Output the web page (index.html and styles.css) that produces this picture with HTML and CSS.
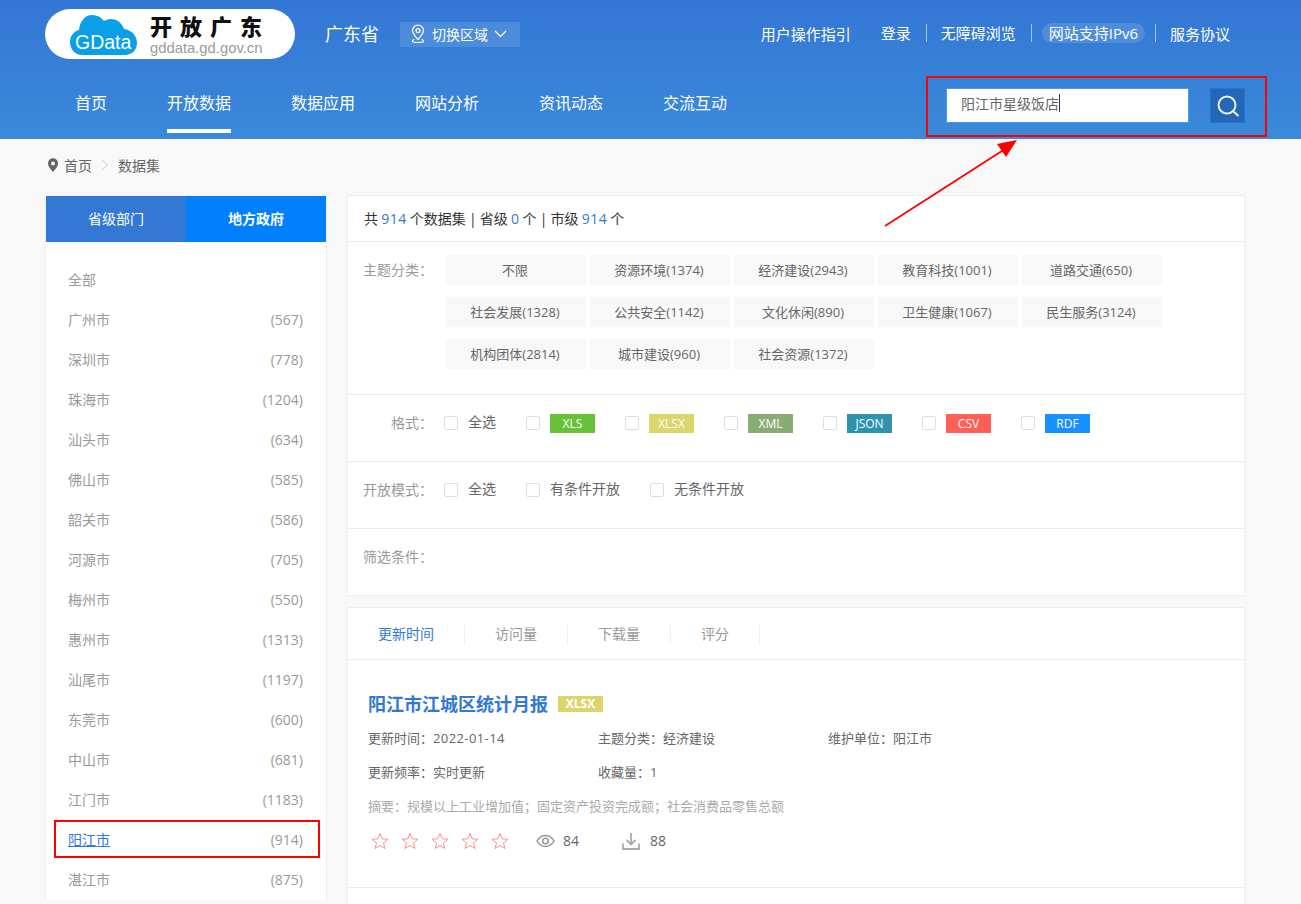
FILE: index.html
```html
<!DOCTYPE html>
<html>
<head>
    <meta charset="utf-8">
    <title>开放广东 - 数据集</title>
    <link rel="stylesheet" href="styles.css">
</head>
<body>
<div class="page">
    <header class="header">
        <div class="wrap">
            <div class="topbar">
                <div class="logo">
                    <svg class="logo-cloud" width="67" height="40" viewBox="0 0 67 40">
                        <path fill="#0aa0e8" d="M12 40C5 40 0 34 0 27c0-6 4-11 9-12C10 6 15 0 22 0c5 0 9 2 12 6 2-1 4-2 7-2 6 0 11 4 13 10 8 1 13 7 13 14 0 7-5 12-12 12z"/>
                        <text x="5" y="34" class="logo-gdata">GData</text>
                    </svg>
                    <div class="logo-text">
                        <div class="logo-title">开放广东</div>
                        <div class="logo-url">gddata.gd.gov.cn</div>
                    </div>
                </div>
                <div class="province">广东省</div>
                <div class="region">
                    <svg width="16" height="20" viewBox="0 0 16 20" fill="none" stroke="#fff" stroke-width="1.2">
                        <path d="M8 15.500C5 12 2.500 9.500 2.500 6.600a5.500 5.500 0 0 1 11 0c0 2.900-2.500 5.400-5.500 8.900z"/>
                        <circle cx="8" cy="6.600" r="2"/>
                        <path d="M4.500 15.500C2.500 16 2 17 2.800 17.800c1 .9 9.400.9 10.400 0 .8-.8.3-1.800-1.700-2.300"/>
                    </svg>
                    <span>切换区域</span>
                    <svg width="13" height="8" viewBox="0 0 13 8" fill="none" stroke="#fff" stroke-width="1.200"><path d="M1 1l5.500 5.500L12 1"/></svg>
                </div>
                <div class="toplinks">
                    <a class="guide">用户操作指引</a>
                    <a class="sep">登录</a>
                    <a class="sep">无障碍浏览</a>
                    <a class="sep"><span class="pill">网站支持IPv6</span></a>
                    <a>服务协议</a>
                </div>
            </div>
            <div class="navbar">
                <nav class="nav">
                    <a>首页</a>
                    <a class="active">开放数据</a>
                    <a>数据应用</a>
                    <a>网站分析</a>
                    <a>资讯动态</a>
                    <a>交流互动</a>
                </nav>
                <div class="search">
                    <div class="search-input">阳江市星级饭店<i class="caret"></i></div>
                    <button class="search-btn">
                        <svg width="24" height="24" viewBox="0 0 24 24" fill="none" stroke="#e8f0fa" stroke-width="2"><circle cx="11" cy="11" r="8.500"/><path d="M17 17l5.500 5"/></svg>
                    </button>
                </div>
            </div>
        </div>
    </header>

    <div class="wrap">
        <div class="crumb">
            <svg width="12" height="14" viewBox="0 0 12 14"><path fill="#6a6460" fill-rule="evenodd" d="M6 14C3 10.500 1 8.300 1 5.300a5 5 0 0 1 10 0C11 8.300 9 10.500 6 14zM6 3.500a2 2 0 1 0 0 4 2 2 0 0 0 0-4z"/></svg>
            <span>首页</span>
            <svg width="8" height="12" viewBox="0 0 8 12" fill="none" stroke="#cfcfcf"><path d="M1 1l5.500 5L1 11"/></svg>
            <span>数据集</span>
        </div>

        <div class="content">
            <aside class="side">
                <div class="side-tabs">
                    <div class="side-tab">省级部门</div>
                    <div class="side-tab current">地方政府</div>
                </div>
                <ul class="city-list">
                    <li><a>全部</a></li>
                    <li><a>广州市</a><span>(567)</span></li>
                    <li><a>深圳市</a><span>(778)</span></li>
                    <li><a>珠海市</a><span>(1204)</span></li>
                    <li><a>汕头市</a><span>(634)</span></li>
                    <li><a>佛山市</a><span>(585)</span></li>
                    <li><a>韶关市</a><span>(586)</span></li>
                    <li><a>河源市</a><span>(705)</span></li>
                    <li><a>梅州市</a><span>(550)</span></li>
                    <li><a>惠州市</a><span>(1313)</span></li>
                    <li><a>汕尾市</a><span>(1197)</span></li>
                    <li><a>东莞市</a><span>(600)</span></li>
                    <li><a>中山市</a><span>(681)</span></li>
                    <li><a>江门市</a><span>(1183)</span></li>
                    <li class="on"><a>阳江市</a><span>(914)</span></li>
                    <li><a>湛江市</a><span>(875)</span></li>
                </ul>
            </aside>

            <main class="main">
                <section class="filter box">
                    <div class="total">共 <b>914</b> 个数据集 | 省级 <b>0</b> 个 | 市级 <b>914</b> 个</div>
                    <div class="row row-theme">
                        <div class="label">主题分类：</div>
                        <div class="chips">
                            <a>不限</a>
                            <a>资源环境(1374)</a>
                            <a>经济建设(2943)</a>
                            <a>教育科技(1001)</a>
                            <a>道路交通(650)</a>
                            <a>社会发展(1328)</a>
                            <a>公共安全(1142)</a>
                            <a>文化休闲(890)</a>
                            <a>卫生健康(1067)</a>
                            <a>民生服务(3124)</a>
                            <a>机构团体(2814)</a>
                            <a>城市建设(960)</a>
                            <a>社会资源(1372)</a>
                        </div>
                    </div>
                    <div class="row">
                        <div class="label">格式：</div>
                        <div class="checks">
                            <label><i class="cb"></i>全选</label>
                            <label><i class="cb"></i><em class="tag xls">XLS</em></label>
                            <label><i class="cb"></i><em class="tag xlsx">XLSX</em></label>
                            <label><i class="cb"></i><em class="tag xml">XML</em></label>
                            <label><i class="cb"></i><em class="tag json">JSON</em></label>
                            <label><i class="cb"></i><em class="tag csv">CSV</em></label>
                            <label><i class="cb"></i><em class="tag rdf">RDF</em></label>
                        </div>
                    </div>
                    <div class="row">
                        <div class="label">开放模式：</div>
                        <div class="checks">
                            <label><i class="cb"></i>全选</label>
                            <label><i class="cb"></i>有条件开放</label>
                            <label><i class="cb"></i>无条件开放</label>
                        </div>
                    </div>
                    <div class="row last">
                        <div class="label">筛选条件：</div>
                    </div>
                </section>

                <section class="results box">
                    <div class="sort">
                        <a class="active">更新时间</a>
                        <a>访问量</a>
                        <a>下载量</a>
                        <a>评分</a>
                    </div>
                    <article class="item">
                        <h3><a>阳江市江城区统计月报</a><em class="item-tag">XLSX</em></h3>
                        <div class="meta">
                            <span>更新时间：<i class="num">2022-01-14</i></span>
                            <span>主题分类：经济建设</span>
                            <span>维护单位：阳江市</span>
                        </div>
                        <div class="meta">
                            <span>更新频率：实时更新</span>
                            <span>收藏量：1</span>
                        </div>
                        <div class="summary">摘要：规模以上工业增加值；固定资产投资完成额；社会消费品零售总额</div>
                        <div class="stats">
                            <div class="stars">
                                <svg width="18" height="18" viewBox="0 0 18 18"><path class="star" d="M9 1.500l2.200 5.300 5.700.4-4.400 3.700 1.400 5.600L9 13.500l-4.900 3 1.400-5.600L1.100 7.200l5.700-.4z"/></svg>
                                <svg width="18" height="18" viewBox="0 0 18 18"><path class="star" d="M9 1.500l2.200 5.300 5.700.4-4.400 3.700 1.400 5.600L9 13.500l-4.900 3 1.400-5.600L1.100 7.200l5.700-.4z"/></svg>
                                <svg width="18" height="18" viewBox="0 0 18 18"><path class="star" d="M9 1.500l2.200 5.300 5.700.4-4.400 3.700 1.400 5.600L9 13.500l-4.900 3 1.400-5.600L1.100 7.200l5.700-.4z"/></svg>
                                <svg width="18" height="18" viewBox="0 0 18 18"><path class="star" d="M9 1.500l2.200 5.300 5.700.4-4.400 3.700 1.400 5.600L9 13.500l-4.900 3 1.400-5.600L1.100 7.200l5.700-.4z"/></svg>
                                <svg width="18" height="18" viewBox="0 0 18 18"><path class="star" d="M9 1.500l2.200 5.300 5.700.4-4.400 3.700 1.400 5.600L9 13.500l-4.900 3 1.400-5.600L1.100 7.200l5.700-.4z"/></svg>
                            </div>
                            <div class="stat views">
                                <svg width="19" height="14" viewBox="0 0 19 14" fill="none" stroke="#999" stroke-width="1.500"><path d="M1 7c2-3.500 5-5.500 8.500-5.500S16 3.500 18 7c-2 3.500-5 5.500-8.500 5.500S3 10.500 1 7z"/><circle cx="9.500" cy="7" r="2.800"/></svg>
                                <span>84</span>
                            </div>
                            <div class="stat">
                                <svg width="18" height="18" viewBox="0 0 18 18" fill="none" stroke="#aaa" stroke-width="1.800"><path d="M9 1v11M4.500 8L9 12.500 13.500 8"/><path d="M1 11.500V17h16v-5.500"/></svg>
                                <span>88</span>
                            </div>
                        </div>
                    </article>
                </section>
            </main>
        </div>
    </div>

    <!-- annotations drawn on top of the screenshot -->
    <div class="mark mark-search"></div>
    <div class="mark mark-city"></div>
    <svg class="arrow" width="140" height="96" viewBox="0 0 140 96">
        <path d="M2 90L122 13" stroke="#f00" stroke-width="1.800"/>
        <path d="M134 4L114 8l9 13z" fill="#f00"/>
    </svg>
</div>
</body>
</html>
```

FILE: styles.css
```css
* {
    box-sizing: border-box;
}

html, body {
    margin: 0;
    padding: 0;
}

body {
    background-color: #f8f8f8;
    font-family: "Open Sans", "Noto Sans CJK SC", sans-serif;
    font-size: 14px;
    color: #666;
}

a {
    color: inherit;
    text-decoration: none;
}

em, i {
    font-style: normal;
}

.page {
    position: relative;
    height: 904px;
    overflow: hidden;
}

.wrap {
    width: 1200px;
    margin-left: 45px;
}

/* header */
.header {
    height: 139px;
    background: linear-gradient(180deg, #3377d5, #3a89da);
    color: #fff;
}

.topbar {
    display: flex;
    align-items: center;
    height: 68px;
}

.logo {
    display: flex;
    align-items: center;
    width: 250px;
    height: 50px;
    padding-left: 25px;
    background-color: #fff;
    border-radius: 25px;
}

.logo-cloud {
    margin-top: 2px;
}

.logo-gdata {
    font-family: "Liberation Sans", sans-serif;
    font-size: 19.500px;
    fill: #fff;
}

.logo-text {
    margin-left: 13px;
}

.logo-title {
    height: 24px;
    font-size: 22px;
    font-weight: 900;
    line-height: 24px;
    letter-spacing: 8px;
    white-space: nowrap;
    color: #111;
}

.logo-url {
    margin-top: 3px;
    font-family: "Liberation Sans", sans-serif;
    font-size: 14.800px;
    line-height: 14px;
    white-space: nowrap;
    color: #9a9a9a;
}

.province {
    margin-left: 30px;
    margin-top: -2px;
    font-size: 18px;
}

.region {
    display: flex;
    align-items: center;
    gap: 6px;
    width: 120px;
    height: 25px;
    margin-left: 21px;
    padding-left: 10px;
    background-color: rgba(255, 255, 255, 0.12);
    font-size: 14px;
}

.toplinks {
    display: flex;
    align-items: center;
    margin-left: auto;
    margin-top: -2px;
    padding-right: 15px;
    font-size: 15px;
}

.guide {
    margin-right: 30px;
}

.toplinks .sep {
    padding-right: 15px;
    margin-right: 15px;
    border-right: 1px solid rgba(255, 255, 255, 0.55);
    line-height: 18px;
}

.toplinks .sep:nth-child(2) {
    margin-right: 14px;
}

.toplinks .sep:nth-child(4) {
    margin-right: 14px;
    padding-right: 10px;
    margin-left: -5px;
}

.pill {
    display: inline-block;
    padding: 0 7px;
    margin: -2px 0;
    line-height: 20px;
    border-radius: 10px;
    background-color: rgba(255, 255, 255, 0.13);
}

.navbar {
    display: flex;
    align-items: flex-start;
    justify-content: space-between;
    height: 71px;
}

.nav {
    display: flex;
    gap: 60px;
    padding-left: 30px;
}

.nav a {
    height: 65px;
    padding-top: 22px;
    font-size: 16px;
    line-height: 26px;
    border-bottom: 4px solid transparent;
}

.nav a.active {
    border-bottom-color: #fff;
}

.search {
    display: flex;
    gap: 21px;
    padding-top: 20px;
}

.search-input {
    display: flex;
    align-items: center;
    width: 243px;
    height: 35px;
    padding-left: 14px;
    padding-bottom: 5px;
    background-color: #fff;
    border: 1px solid #4a9ae8;
    color: #666;
}

.caret {
    width: 1px;
    height: 18px;
    background-color: #333;
}

.search-btn {
    display: flex;
    align-items: center;
    justify-content: center;
    width: 35px;
    height: 35px;
    padding: 0;
    background-color: #2566b5;
    border: 1px solid #1a78d8;
}

/* breadcrumb */
.crumb {
    display: flex;
    align-items: center;
    height: 56px;
    padding-left: 2px;
    padding-bottom: 4px;
    color: #666;
}

.crumb span {
    margin-left: 5px;
}

.crumb svg + span + svg {
    margin-left: 9px;
    margin-right: 4px;
}

.content {
    display: flex;
    gap: 20px;
    align-items: flex-start;
    padding-top: 1px;
}

/* left column */
.side {
    width: 282px;
    flex: none;
    background-color: #fff;
    border-right: 1px solid #eee;
    border-left: 1px solid #eee;
}

.side-tabs {
    display: flex;
    height: 46px;
}

.side-tab {
    flex: 1;
    line-height: 46px;
    text-align: center;
    background-color: #3478d5;
    color: #fff;
}

.side-tab.current {
    background-color: #0080ff;
    font-weight: 700;
}

.city-list {
    margin: 0;
    padding: 18px 23px 0 22px;
    list-style: none;
    color: #999;
}

.city-list li {
    display: flex;
    justify-content: space-between;
    height: 40px;
    line-height: 40px;
}

.city-list li.on a {
    color: #3478d5;
    text-decoration: underline;
}

/* right column */
.main {
    width: 898px;
    flex: none;
    margin-top: -1px;
}

.box {
    background-color: #fff;
    border: 1px solid #eee;
}

.filter {
    height: 401px;
}

.total {
    height: 46px;
    padding-left: 16px;
    line-height: 46px;
    word-spacing: -0.5px;
    color: #333;
    border-bottom: 1px solid #eee;
}

.total b {
    font-weight: 400;
    letter-spacing: 0.5px;
    color: #3478d5;
}

.row {
    display: flex;
    align-items: flex-start;
    height: 67px;
    padding-top: 19px;
    border-bottom: 1px solid #eee;
}

.row.last {
    border-bottom: none;
}

.row-theme {
    height: 153px;
    padding-top: 13px;
}

.label {
    width: 85px;
    flex: none;
    line-height: 17px;
    text-align: right;
    color: #999;
}

.row-theme .label {
    line-height: 30px;
}

.chips {
    display: flex;
    flex-wrap: wrap;
    gap: 12px 4px;
    margin-left: 13px;
}

.chips a {
    width: 140px;
    height: 30px;
    padding-right: 2px;
    line-height: 30px;
    text-align: center;
    background-color: #f8f8f8;
    color: #666;
    font-size: 13px;
}

.checks {
    display: flex;
    gap: 30px;
    margin-left: 11px;
}

.checks label {
    display: flex;
    align-items: flex-start;
    height: 19px;
    line-height: 15px;
    color: #666;
}

.cb {
    width: 14px;
    height: 14px;
    margin-top: 2px;
    margin-right: 10px;
    background-color: #fff;
    border: 1px solid #dcdfe6;
    border-radius: 2px;
}

.tag {
    width: 45px;
    height: 19px;
    line-height: 19px;
    text-align: center;
    font-size: 12px;
    color: #fff;
}

.xls { background-color: #67c23a; }
.xlsx { background-color: #dbd56b; }
.xml { background-color: #8aab74; }
.json { background-color: #2e93ab; }
.csv { background-color: #ff5f57; }
.rdf { background-color: #1890ff; }

.results {
    min-height: 400px;
    margin-top: 11px;
}

.sort {
    display: flex;
    height: 52px;
    align-items: center;
    border-bottom: 1px solid #eee;
    color: #999;
}

.sort a {
    padding: 0 30px;
    line-height: 18px;
    border-right: 1px solid #eee;
}

.sort a.active {
    color: #3478d5;
}

.item {
    height: 228px;
    padding: 30px 20px 0;
    border-bottom: 1px solid #eee;
}

.item h3 {
    display: flex;
    align-items: center;
    margin: 0 0 3px;
    font-size: 18px;
    line-height: 28px;
    color: #3478d5;
}

.item-tag {
    width: 45px;
    height: 16px;
    margin-left: 10px;
    line-height: 16px;
    text-align: center;
    font-size: 12px;
    font-weight: 700;
    color: #fff;
    background-color: #dbd56b;
}

.meta {
    display: flex;
    height: 34px;
    line-height: 34px;
    font-size: 13px;
    color: #666;
}

.meta span {
    width: 230px;
}

.num {
    letter-spacing: 0.4px;
}

.summary {
    height: 34px;
    line-height: 34px;
    font-size: 13px;
    color: #aaa;
}

.stats {
    display: flex;
    align-items: center;
    height: 36px;
    color: #666;
}

.stars {
    display: flex;
    gap: 12px;
    width: 168px;
    padding-left: 3px;
}

.star {
    fill: none;
    stroke: #ff8d8d;
    stroke-width: 1;
}

.stat {
    display: flex;
    align-items: center;
    gap: 10px;
}

.stat span {
    padding-bottom: 2px;
}

.views {
    gap: 8px;
    width: 86px;
}

/* annotations */
.mark {
    position: absolute;
    border: 2px solid #f00;
}

.mark-search {
    left: 926px;
    top: 76px;
    width: 341px;
    height: 61px;
}

.mark-city {
    left: 54px;
    top: 820px;
    width: 266px;
    height: 38px;
}

.arrow {
    position: absolute;
    left: 883px;
    top: 136px;
}
```
